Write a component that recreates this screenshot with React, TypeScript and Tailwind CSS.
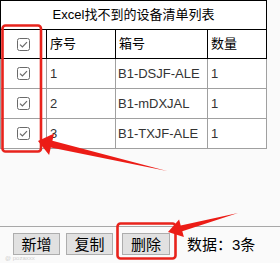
import React from "react";

function Check() {
  return (
    <svg width="13" height="13" viewBox="0 0 13 13" className="block">
      <rect x="0.5" y="0.5" width="12" height="12" rx="2" fill="#fff" stroke="#6a6a6a" />
      <path d="M3 6.6 L5.4 9 L10 4.2" fill="none" stroke="#6a6a6a" strokeWidth="1.2" />
    </svg>
  );
}

const rows = [
  ["1", "B1-DSJF-ALE", "1"],
  ["2", "B1-mDXJAL", "1"],
  ["3", "B1-TXJF-ALE", "1"],
];

export default function App() {
  return (
    <div className="relative w-[280px] h-[263px] overflow-hidden bg-[#fafafa] font-['Liberation_Sans','Noto_Sans_CJK_SC',sans-serif] text-black">
      <div className="w-[267px] bg-white">
        <div className="border-t border-l border-r border-black">
          <div className="h-[29px] border-b border-black flex items-center justify-center text-[13px]">
            Excel找不到的设备清单列表
          </div>
          <div className="grid grid-cols-[46px_69px_92px_59px] h-[29px] border-b border-black text-[13px]">
            <div className="border-r border-black flex items-center justify-center">
              <Check />
            </div>
            <div className="border-r border-black flex items-center pl-[3px]">序号</div>
            <div className="border-r border-black flex items-center pl-[3px]">箱号</div>
            <div className="flex items-center pl-[3px]">数量</div>
          </div>
        </div>
        <div className="border-l border-r border-[#a0a0a0] text-[13px] text-[#333]">
          {rows.map((r) => (
            <div key={r[0]} className="grid grid-cols-[46px_69px_92px_59px] h-[30px] border-b border-[#a0a0a0]">
              <div className="border-r border-[#a0a0a0] flex items-center justify-center">
                <Check />
              </div>
              <div className="border-r border-[#a0a0a0] flex items-center pl-[3px]">{r[0]}</div>
              <div className="border-r border-[#a0a0a0] flex items-center pl-[2px]">{r[1]}</div>
              <div className="flex items-center pl-[3px]">{r[2]}</div>
            </div>
          ))}
        </div>
      </div>

      <div className="mt-[77px] border-t border-[#a8a8a8] pt-[6px] flex items-center text-[15px]">
        <button className="ml-[13px] w-[47px] h-[22px] bg-[#e1e1e1] border border-[#adadad] flex items-center justify-center leading-none">新增</button>
        <button className="ml-[6px] w-[47px] h-[22px] bg-[#e1e1e1] border border-[#adadad] flex items-center justify-center leading-none">复制</button>
        <button className="ml-[9px] w-[48px] h-[22px] bg-[#e1e1e1] border border-[#adadad] flex items-center justify-center leading-none">删除</button>
        <span className="ml-[17px] leading-none">数据：3条</span>
      </div>

      <div className="absolute left-[5px] top-[255px] text-[6px] leading-none text-[#d0d0d0]">@ pozaxxx</div>

      <svg className="absolute left-0 top-0 pointer-events-none" width="280" height="263" viewBox="0 0 280 263">
        <rect x="2.5" y="25.5" width="38.5" height="126" rx="3" fill="none" stroke="#e8231c" strokeWidth="2.6" />
        <rect x="117.5" y="223.5" width="58" height="35" rx="3" fill="none" stroke="#e8231c" strokeWidth="2.6" />
        <polygon
          points="38,141 54.1,133.5 52.4,140.8 167,171 50.8,147.6 49.1,154.9"
          fill="#ec1c16"
        />
        <polygon
          points="168,232 179.1,219.6 180.7,225.4 238,213 182.3,231.2 183.9,237"
          fill="#ec1c16"
        />
      </svg>
    </div>
  );
}
